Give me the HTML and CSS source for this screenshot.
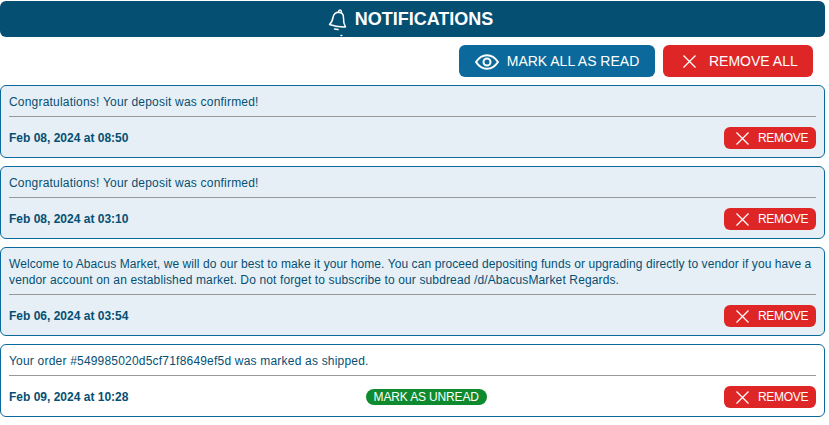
FILE: index.html
```html
<!DOCTYPE html>
<html lang="en">
<head>
<meta charset="utf-8">
<title>Notifications</title>
<link rel="stylesheet" href="styles.css">
</head>
<body>
<main class="page">
  <h1 class="title">
    <svg class="bell" viewBox="0 0 20 29" width="20" height="29" fill="none" stroke="#fff" stroke-width="1.500" stroke-linecap="round" stroke-linejoin="round"><path d="M1.500 16.500c2.200-1.800 3-4.300 3.500-7 .6-3.200 2.800-5.200 5.800-5.200 3 .2 4.800 2.400 4.700 5.600-.1 3 .2 6 2 9-4.800.2-11-.4-16-2.400z"/><path d="M10.500 4c.2-2.600 2.900-2.700 3 0"/><path d="M6.500 21l3.500.6"/><path d="M13 27.500h.8"/></svg>
    <span>NOTIFICATIONS</span>
  </h1>
  <div class="actions">
    <a class="btn btn-blue">
      <svg class="icon-eye" viewBox="0 0 24 16" width="24" height="16" fill="none" stroke="#fff" stroke-width="2"><path d="M1 8c3-4.500 6.800-6.800 11-6.800S20 3.500 23 8c-3 4.500-6.800 6.800-11 6.800S4 12.500 1 8z"/><circle cx="12" cy="8" r="3.500"/></svg>
      MARK ALL AS READ
    </a>
    <a class="btn btn-red">
      <svg class="icon-x" viewBox="0 0 13 13" width="13" height="13" stroke="#fff" stroke-width="1.300"><path d="M.5.5l12 12M12.500.5l-12 12"/></svg>
      REMOVE ALL
    </a>
  </div>
  <section class="list">
    <article class="card unread">
      <p class="msg msg-short">Congratulations! Your deposit was confirmed!</p>
      <div class="foot">
        <time class="date">Feb 08, 2024 at 08:50</time>
        <a class="remove"><svg viewBox="0 0 13 13" width="13" height="13" stroke="#fff" stroke-width="1.300"><path d="M.5.5l12 12M12.500.5l-12 12"/></svg>REMOVE</a>
      </div>
    </article>
    <article class="card unread">
      <p class="msg msg-short">Congratulations! Your deposit was confirmed!</p>
      <div class="foot">
        <time class="date">Feb 08, 2024 at 03:10</time>
        <a class="remove"><svg viewBox="0 0 13 13" width="13" height="13" stroke="#fff" stroke-width="1.300"><path d="M.5.5l12 12M12.500.5l-12 12"/></svg>REMOVE</a>
      </div>
    </article>
    <article class="card unread">
      <p class="msg msg-long">Welcome to Abacus Market, we will do our best to make it your home. You can proceed depositing funds or upgrading directly to vendor if you have a <span class="msg-tail">vendor account on an established market. Do not forget to subscribe to our subdread /d/AbacusMarket Regards.</span></p>
      <div class="foot">
        <time class="date">Feb 06, 2024 at 03:54</time>
        <a class="remove"><svg viewBox="0 0 13 13" width="13" height="13" stroke="#fff" stroke-width="1.300"><path d="M.5.5l12 12M12.500.5l-12 12"/></svg>REMOVE</a>
      </div>
    </article>
    <article class="card">
      <p class="msg msg-short">Your order #549985020d5cf71f8649ef5d was marked as shipped.</p>
      <div class="foot">
        <time class="date">Feb 09, 2024 at 10:28</time>
        <a class="unread-tag">MARK AS UNREAD</a>
        <a class="remove"><svg viewBox="0 0 13 13" width="13" height="13" stroke="#fff" stroke-width="1.300"><path d="M.5.5l12 12M12.500.5l-12 12"/></svg>REMOVE</a>
      </div>
    </article>
  </section>
</main>
</body>
</html>
```
FILE: styles.css
```css
* { box-sizing: border-box; }
html, body { margin: 0; background: #fff; }
body { font-family: "Liberation Sans", Arial, sans-serif; font-size: 12px; color: #054f73; }
.page { width: 825px; padding-top: 1px; }
.title { margin: 0; height: 36px; padding-right: 4px; display: flex; align-items: center; justify-content: center; gap: 7px; background: #054f73; color: #fff; border-radius: 6px; font-size: 18px; font-weight: 700; }
.bell { margin-top: 7px; overflow: visible; }
.actions { display: flex; justify-content: flex-end; gap: 8px; margin-top: 8px; padding-right: 12px; }
.btn { height: 32px; display: flex; align-items: center; border-radius: 6px; color: #fff; font-size: 14px; }
.btn-blue { width: 196px; justify-content: center; gap: 8px; background: #0b6a9b; }
.icon-eye { margin-top: 1px; }
.btn-red { width: 150px; padding-left: 20px; gap: 13px; background: #de2626; }
.list { display: flex; flex-direction: column; gap: 8px; margin-top: 8px; }
.card { border: 1px solid #0b6a9b; border-radius: 6px; padding: 8px; background: #fff; }
.card.unread { background: #e6eff6; }
.msg { margin: 0; padding-bottom: 6px; line-height: 16px; border-bottom: 1px solid #999; }
.msg-short { letter-spacing: .2px; }
.msg-long { letter-spacing: .083px; }
.msg-tail { letter-spacing: .127px; }
.foot { display: flex; align-items: center; justify-content: space-between; margin-top: 10px; }
.date { font-weight: 700; }
.remove { width: 92px; height: 22px; padding-left: 12px; display: flex; align-items: center; gap: 9px; background: #de2626; color: #fff; border-radius: 6px; letter-spacing: -.3px; }
.unread-tag { height: 16px; width: 121px; display: flex; align-items: center; justify-content: center; background: #0f8a2e; color: #fff; border-radius: 8px; letter-spacing: -.15px; }
```
